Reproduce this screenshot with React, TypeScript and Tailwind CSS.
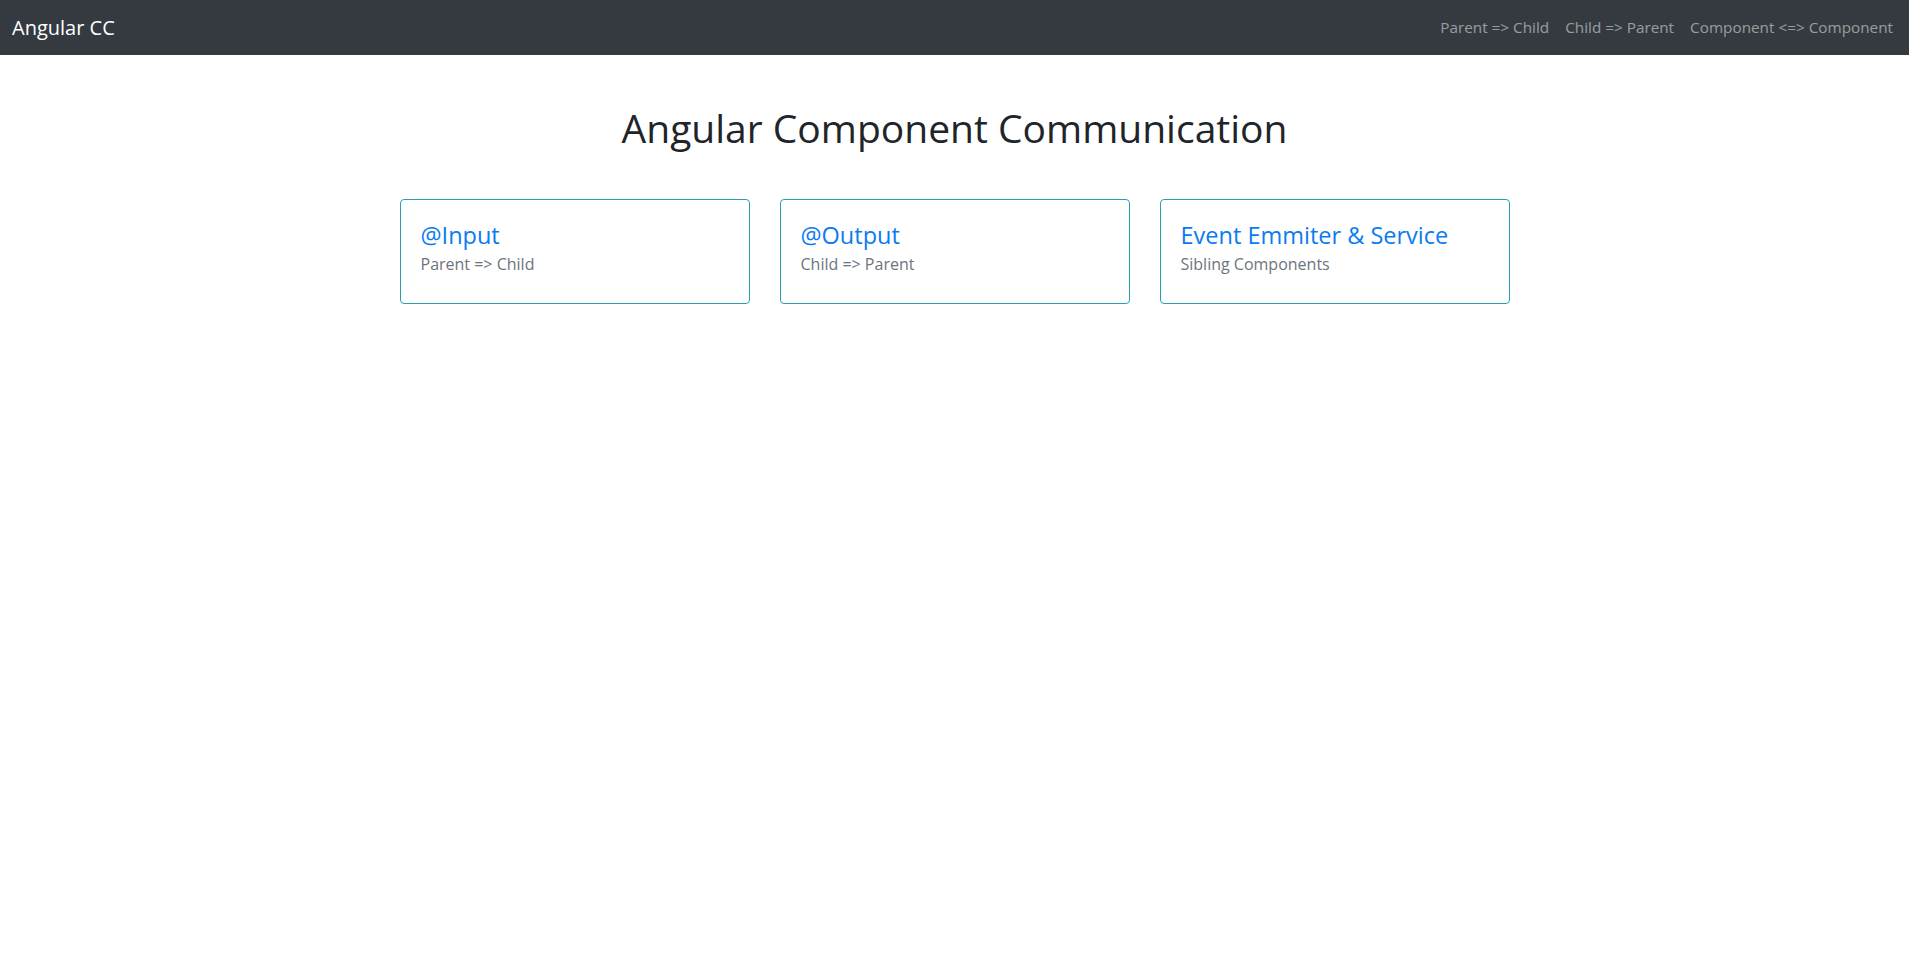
const NAV_LINKS = ["Parent => Child", "Child => Parent", "Component <=> Component"];

const CARDS = [
  { title: "@Input", subtitle: "Parent => Child" },
  { title: "@Output", subtitle: "Child => Parent" },
  { title: "Event Emmiter & Service", subtitle: "Sibling Components" },
];

export default function App() {
  return (
    <div className="min-h-screen bg-white font-['Open_Sans',sans-serif] text-[#212529]">
      <nav className="flex h-[55px] items-center justify-between bg-[#343a40] px-2">
        <a className="px-[4px] text-[20px] text-white">Angular CC</a>
        <ul className="flex items-center">
          {NAV_LINKS.map((link) => (
            <li key={link}>
              <a className="block px-2 text-[15.3px] text-white/50">{link}</a>
            </li>
          ))}
        </ul>
      </nav>

      <div className="mx-auto w-[1140px] px-[15px]">
        <h1 className="mt-[50px] text-center text-[39px] leading-[1.2] font-normal">
          Angular Component Communication
        </h1>

        <div className="mt-[47px] grid grid-cols-3 gap-[30px]">
          {CARDS.map((card) => (
            <div key={card.title} className="rounded-[4px] border border-[#2a9fb4] bg-white px-5 pt-[21px] pb-[27px]">
              <h4 className="text-[23.5px] leading-[1.2] text-[#0a7bf0]">{card.title}</h4>
              <p className="mt-[3px] text-[16px] leading-[1.5] text-[#6c757d]">{card.subtitle}</p>
            </div>
          ))}
        </div>
      </div>
    </div>
  );
}
